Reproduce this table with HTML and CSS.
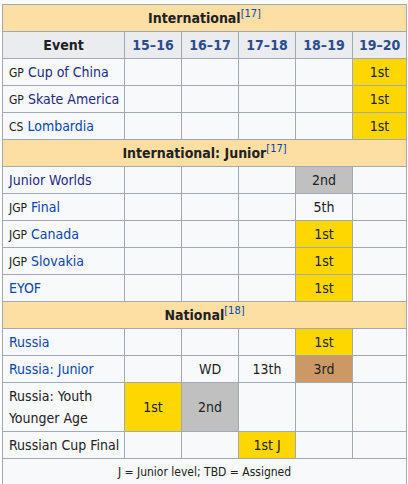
FILE: index.html
```html
<!DOCTYPE html>
<html>
<head>
<meta charset="utf-8">
<link rel="stylesheet" href="styles.css">
</head>
<body>
<table class="results">
  <colgroup>
    <col class="c-event"><col class="c-yr"><col class="c-yr"><col class="c-yr"><col class="c-yr"><col class="c-last">
  </colgroup>
  <tr><th colspan="6" class="sec">International<sup class="ref">[17]</sup></th></tr>
  <tr class="head">
    <th>Event</th><th class="yr">15–16</th><th class="yr">16–17</th><th class="yr">17–18</th><th class="yr">18–19</th><th class="yr">19–20</th>
  </tr>
  <tr><td class="ev"><span class="pre">GP</span> <a class="vis">Cup of China</a></td><td></td><td></td><td></td><td></td><td class="gold">1st</td></tr>
  <tr><td class="ev"><span class="pre">GP</span> <a class="vis">Skate America</a></td><td></td><td></td><td></td><td></td><td class="gold">1st</td></tr>
  <tr><td class="ev"><span class="pre">CS</span> <a>Lombardia</a></td><td></td><td></td><td></td><td></td><td class="gold">1st</td></tr>
  <tr><th colspan="6" class="sec">International: Junior<sup class="ref">[17]</sup></th></tr>
  <tr><td class="ev"><a class="vis">Junior Worlds</a></td><td></td><td></td><td></td><td class="silver">2nd</td><td></td></tr>
  <tr><td class="ev"><span class="pre">JGP</span> <a>Final</a></td><td></td><td></td><td></td><td class="plain">5th</td><td></td></tr>
  <tr><td class="ev"><span class="pre">JGP</span> <a>Canada</a></td><td></td><td></td><td></td><td class="gold">1st</td><td></td></tr>
  <tr><td class="ev"><span class="pre">JGP</span> <a>Slovakia</a></td><td></td><td></td><td></td><td class="gold">1st</td><td></td></tr>
  <tr><td class="ev"><a>EYOF</a></td><td></td><td></td><td></td><td class="gold">1st</td><td></td></tr>
  <tr><th colspan="6" class="sec">National<sup class="ref">[18]</sup></th></tr>
  <tr><td class="ev"><a>Russia</a></td><td></td><td></td><td></td><td class="gold">1st</td><td></td></tr>
  <tr><td class="ev"><a>Russia: Junior</a></td><td></td><td class="plain">WD</td><td class="plain">13th</td><td class="bronze">3rd</td><td></td></tr>
  <tr><td class="ev two">Russia: Youth<br>Younger Age</td><td class="gold">1st</td><td class="silver">2nd</td><td></td><td></td><td></td></tr>
  <tr><td class="ev">Russian Cup Final</td><td></td><td></td><td class="gold">1st J</td><td></td><td></td></tr>
  <tr><td colspan="6" class="foot">J = Junior level; TBD = Assigned</td></tr>
</table>
</body>
</html>
```

FILE: styles.css
```css
html, body {
  margin: 0;
  padding: 0;
  background: #ffffff;
}
body {
  font-family: "DejaVu Sans Condensed", "DejaVu Sans", sans-serif;
  font-size: 14px;
  color: #202122;
}
.results {
  margin: 4px 0 0 2px;
  border-collapse: separate;
  border-spacing: 0;
  table-layout: fixed;
  width: 405px;
  background: #f8f9fa;
  border-top: 1px solid #a2a9b1;
  border-left: 1px solid #a2a9b1;
}
.c-event { width: 122px; }
.c-yr { width: 57px; }
.c-last { width: 54px; }
.results th, .results td {
  box-sizing: border-box;
  border: 0;
  border-right: 1px solid #a2a9b1;
  border-bottom: 1px solid #a2a9b1;
  padding: 0 6px;
  line-height: 26px;
  text-align: center;
  white-space: nowrap;
  overflow: hidden;
}
.results td.two {
  line-height: 22px;
  padding-top: 2px;
  padding-bottom: 2px;
}
.results th.sec {
  background: #fddfa4;
  font-weight: bold;
}
.head th {
  background: #eaecf0;
  font-weight: bold;
}
.head th.yr {
  color: #2a4b8d;
}
.ref {
  font-weight: normal;
  font-size: 11px;
  line-height: 0;
  vertical-align: 0.55em;
  color: #0645ad;
}
.results td.ev {
  text-align: left;
  padding-left: 6px;
  padding-right: 3px;
}
.pre {
  font-size: 12px;
  line-height: 0;
}
a {
  color: #0645ad;
  text-decoration: none;
}
a.vis {
  color: #1d2a80;
}
.gold { background: #ffd700; }
.silver { background: #c0c0c0; }
.bronze { background: #cc9966; }
.results td.foot {
  font-size: 12px;
  line-height: 26px;
}
```
